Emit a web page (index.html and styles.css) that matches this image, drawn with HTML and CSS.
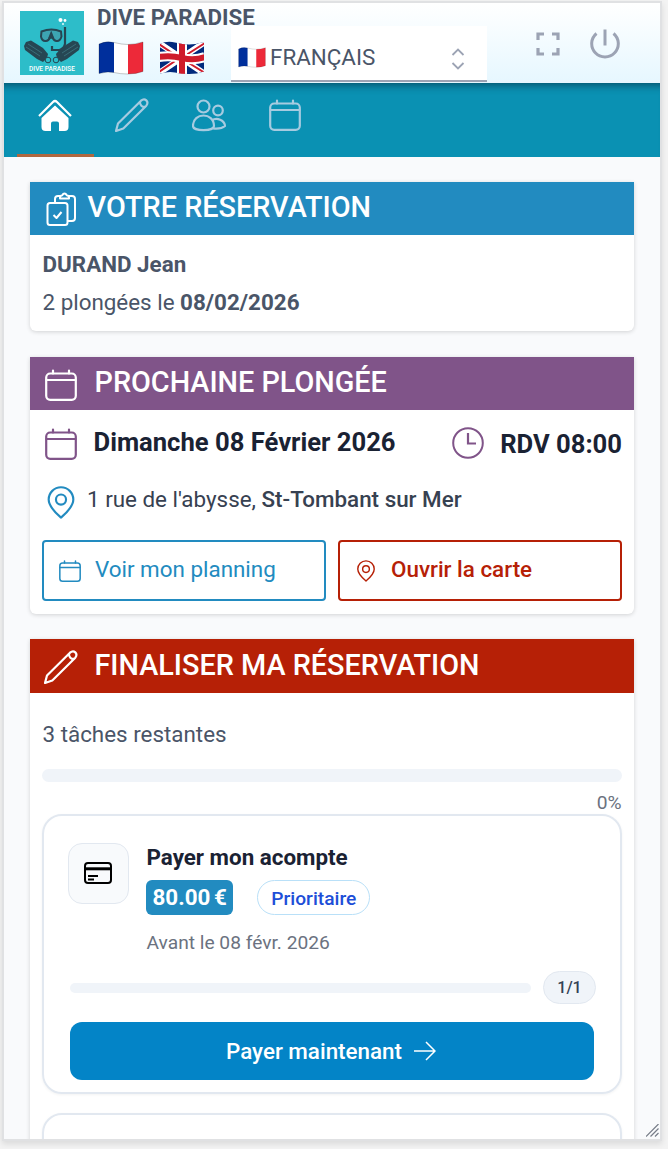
FILE: index.html
```html
<!DOCTYPE html>
<html lang="fr">
<head>
    <meta charset="UTF-8">
    <meta name="viewport" content="width=device-width, initial-scale=1.0">
    <title>Dive Paradise</title>
    <link rel="stylesheet" href="styles.css">
</head>
<body>
    <!-- Shared icons -->
    <svg class="sprite" aria-hidden="true">
        <symbol id="calendar" viewBox="0 0 32 32">
            <g fill="none" stroke="currentColor" stroke-width="2.200" stroke-linecap="round">
                <rect x="1.200" y="4.500" width="29.600" height="26.300" rx="4"/>
                <path d="M1.500 11h29M8 1.500v3M24 1.500v3"/>
            </g>
        </symbol>
        <symbol id="pencil" viewBox="0 0 34 34">
            <g fill="none" stroke="currentColor" stroke-width="2.200" stroke-linejoin="round">
                <path d="M1 33l2-7.500L26 2.700c4-3.500 8.300 1 5.300 5L8.300 30.500z"/>
                <path d="M25 3.700c-.3 3.500 2 5.500 5.300 5.200"/>
            </g>
        </symbol>
        <symbol id="pin" viewBox="0 0 28 34">
            <g fill="none" stroke="currentColor" stroke-width="2.200">
                <path d="M14 32.500C10 29 1.300 22 1.300 14a12.700 12.700 0 0 1 25.400 0c0 8-8.700 15-12.700 18.500z"/>
                <circle cx="14" cy="14" r="5.200"/>
            </g>
        </symbol>
        <symbol id="flag-fr" viewBox="0 0 46 34">
            <path d="M1 3Q8-.5 16 1.500V31.500Q8 30 1 32.500z" fill="#002f9c"/>
            <path d="M16 1.500Q23 3.500 30 3.500V33Q23 33 16 31.500z" fill="#fff"/>
            <path d="M30 3.500Q38 3.500 45 1V30.500Q38 33 30 33z" fill="#ed2939"/>
            <path d="M1 3Q8-.5 16 1.500T30 3.500T45 1V30.500Q38 33 30 33T16 31.500T1 32.500z" fill="none" stroke="#000" stroke-opacity=".22"/>
        </symbol>
        <symbol id="flag-gb" viewBox="0 0 46 34">
            <clipPath id="wave"><path d="M1 3Q8-.5 16 1.500T30 3.500T45 1V30.500Q38 33 30 33T16 31.500T1 32.500z"/></clipPath>
            <g clip-path="url(#wave)" fill="none">
                <path d="M0 0h46v34H0z" fill="#012a7d"/>
                <path d="M0 2l46 31M0 32L46 1" stroke="#fff" stroke-width="6"/>
                <path d="M0 3l22 15M24 16L46 2M0 31l22-15M25 19l21 13" stroke="#cf1b2b" stroke-width="2"/>
                <path d="M23 0v34M0 16q11-2 23 1t23-1" stroke="#fff" stroke-width="10"/>
                <path d="M23 0v34M0 16q11-2 23 1t23-1" stroke="#cf1b2b" stroke-width="6"/>
            </g>
        </symbol>
    </svg>

    <div class="app">
        <header class="header">
            <svg class="logo" viewBox="0 0 64 64">
                <rect width="64" height="64" fill="#2dbdc9"/>
                <!-- fins -->
                <path d="M4 35l2-4 5-1.500L23 37l5 6-1 4-4 4-6-3L5 39z" fill="#264653"/>
                <path d="M60 35l-2-4-5-1.500L41 37l-5 6 1 4 4 4 6-3 12-9z" fill="#264653"/>
                <path d="M6 36l14 9M8 33l14 9M58 36l-14 9M56 33l-14 9" stroke="#3d7682" stroke-width=".8"/>
                <g fill="#2dbdc9" stroke="#264653" stroke-width="1"><circle cx="28" cy="49" r="2.800"/><circle cx="36" cy="49" r="2.800"/></g>
                <!-- mask and snorkel -->
                <path d="M21.500 20.500q10-4 19.500 0l.5 5q-1.500 5-5 4.500-2.500 0-4-3.500h-2.500q-1.500 3.500-4 3.500-4 .5-5-4.500z" fill="#3da5b2" stroke="#264653" stroke-width="2"/>
                <path d="M28 27.500l3.200-8 3.200 8z" fill="#264653"/>
                <path d="M45 16v17q-1.500 5.500-6 6h-7v-4" fill="none" stroke="#264653" stroke-width="2.200"/>
                <g fill="#fff"><circle cx="40.500" cy="9" r="2"/><circle cx="45" cy="9.500" r="1.400"/><circle cx="43" cy="13" r=".9"/></g>
                <text x="9" y="60" textLength="46" lengthAdjust="spacingAndGlyphs" class="logo-text">DIVE PARADISE</text>
            </svg>
            <div class="brand">
                <div class="brand-name">DIVE PARADISE</div>
                <div class="languages">
                    <svg class="flag"><use href="#flag-fr"/></svg>
                    <svg class="flag"><use href="#flag-gb"/></svg>
                    <div class="language-select">
                        <svg class="flag-small"><use href="#flag-fr"/></svg>
                        <span>FRANÇAIS</span>
                        <svg class="chevrons" viewBox="0 0 14 22"><path d="M1.500 7L7 1.500 12.500 7M1.500 15L7 20.500 12.500 15" fill="none" stroke="currentColor" stroke-width="1.800"/></svg>
                    </div>
                </div>
            </div>
            <svg class="fullscreen" viewBox="0 0 24 24"><path d="M2 8V2H8M16 2h6V8M22 16v6H16M8 22H2V16" fill="none" stroke="currentColor" stroke-width="3.200"/></svg>
            <svg class="power" viewBox="0 0 30 30"><path d="M6.500 4.500a13.300 13.300 0 1 0 17 0M15 .500v16" fill="none" stroke="currentColor" stroke-width="3"/></svg>
        </header>

        <nav class="nav">
            <a class="nav-item active">
                <svg viewBox="0 0 34 34">
                    <path d="M1 18L15 4q2-2 4 0l14 14" fill="none" stroke="currentColor" stroke-width="2.200"/>
                    <path d="M17 7.500L30.500 20v9q0 4-4 4H21v-7.500q0-2-2-2h-4q-2 0-2 2V33H7.500q-4 0-4-4v-9z" fill="currentColor"/>
                </svg>
            </a>
            <a class="nav-item"><svg><use href="#pencil"/></svg></a>
            <a class="nav-item">
                <svg viewBox="0 0 34 34">
                    <g fill="none" stroke="currentColor" stroke-width="2.200">
                        <circle cx="11.500" cy="8.500" r="6"/>
                        <circle cx="26" cy="12.500" r="4.800"/>
                        <path d="M1 28C1 14 22 14 22 28C22 33.500 1 33.500 1 28zM19.500 22.500C25 19 32.500 22 33 28Q29 31.500 21 30.500"/>
                    </g>
                </svg>
            </a>
            <a class="nav-item"><svg class="nav-calendar"><use href="#calendar"/></svg></a>
        </nav>

        <main class="content">
            <section class="card">
                <h2 class="card-title blue">
                    <svg class="clipboard" viewBox="0 0 30 34">
                        <g fill="none" stroke="currentColor" stroke-width="2" stroke-linejoin="round">
                            <rect x="1.500" y="11" width="20" height="22" rx="2.500"/>
                            <path d="M9 11V7q0-3 3-3h3M22 4h4q3 0 3 3v19q0 3-3 3h-4M14 5.500q0-2 2-2 2.500-4 5 0 2 0 2 2v1h-9z"/>
                            <path d="M7.500 23l3 3 5-6"/>
                        </g>
                    </svg>
                    VOTRE RÉSERVATION
                </h2>
                <div class="booking">
                    <div><strong>DURAND Jean</strong></div>
                    <div>2 plongées le <strong>08/02/2026</strong></div>
                </div>
            </section>

            <section class="card">
                <h2 class="card-title purple"><svg class="icon"><use href="#calendar"/></svg>PROCHAINE PLONGÉE</h2>
                <div class="dive">
                    <div class="dive-date">
                        <svg class="icon"><use href="#calendar"/></svg>
                        <span>Dimanche 08 Février 2026</span>
                        <svg class="icon clock" viewBox="0 0 32 32"><path d="M16 6v10.500h8" fill="none" stroke="currentColor" stroke-width="2.200"/><circle cx="16" cy="16" r="14.800" fill="none" stroke="currentColor" stroke-width="2"/></svg>
                        <span class="dive-time">RDV 08:00</span>
                    </div>
                    <div class="dive-place">
                        <svg class="pin"><use href="#pin"/></svg>
                        <span>1 rue de l'abysse, <b>St-Tombant sur Mer</b></span>
                    </div>
                    <div class="actions">
                        <a class="btn btn-blue"><svg><use href="#calendar"/></svg>Voir mon planning</a>
                        <a class="btn btn-red"><svg><use href="#pin"/></svg>Ouvrir la carte</a>
                    </div>
                </div>
            </section>

            <section class="card">
                <h2 class="card-title red"><svg class="icon pencil"><use href="#pencil"/></svg>FINALISER MA RÉSERVATION</h2>
                <div class="tasks">
                    <div class="remaining">3 tâches restantes</div>
                    <div class="progress"></div>
                    <div class="percent">0%</div>
                    <article class="task">
                        <div class="task-head">
                            <div class="task-icon">
                                <svg viewBox="0 0 28 22"><rect x="1" y="1" width="26" height="20" rx="3" fill="none" stroke="#000" stroke-width="2"/><path d="M1 6.800h26" stroke="#000" stroke-width="3"/><path d="M4 14h10M4 17.500h6" stroke="#000" stroke-width="1.800"/></svg>
                            </div>
                            <div>
                                <h3>Payer mon acompte</h3>
                                <div class="tags"><span class="price">80.00 €</span><span class="priority">Prioritaire</span></div>
                                <div class="deadline">Avant le 08 févr. 2026</div>
                            </div>
                        </div>
                        <div class="task-progress"><div class="bar"></div><span class="count">1/1</span></div>
                        <button class="pay">Payer maintenant
                            <svg viewBox="0 0 22 20"><path d="M0 10h20.500M12 1l9 9-9 9" fill="none" stroke="currentColor" stroke-width="1.500"/></svg>
                        </button>
                    </article>
                    <article class="task"></article>
                </div>
            </section>
        </main>
        <svg class="resize" viewBox="0 0 13 13"><path d="M0 12.500L12.500 0M4.500 12.500l8-8M9 12.500L12.500 9" stroke="#777c88" stroke-width="1.200"/></svg>
    </div>
</body>
</html>
```

FILE: styles.css
```css
:root {
    --blue: #228bc0;
    --purple: #805489;
    --red: #b62006;
    --line: #e2e8f0;
    --dark: #1a2233;
}

* {
    box-sizing: border-box;
}

body {
    margin: 0;
    padding: 1px 6px 0 2px;
    height: 1149px;
    overflow: hidden;
    background: #f3f3f3;
    font-family: Roboto, "Liberation Sans", sans-serif;
    font-size: 22.4px;
    color: #4a5568;
}

h2, h3 {
    margin: 0;
}

svg {
    display: block;
    flex-shrink: 0;
}

.sprite {
    position: absolute;
    width: 0;
    height: 0;
}

.app {
    position: relative;
    height: 1140px;
    overflow: hidden;
    border: 2px solid #e0e1e3;
    background: #f9fafc;
    box-shadow: 0 3px 6px rgba(0, 0, 0, 0.1);
}

.header {
    display: flex;
    height: 80px;
    padding-left: 16px;
    background: linear-gradient(#fff, #e6f7ff);
    color: #9ca3b4;
}

.logo {
    width: 64px;
    height: 64px;
    margin-top: 8px;
}

.logo-text {
    font-size: 7px;
    font-weight: 500;
    fill: #fff;
}

.brand {
    padding: 5px 0 0 13px;
}

.brand-name {
    line-height: 18px;
    font-size: 22.3px;
    font-weight: bold;
    color: #4a5568;
}

.languages {
    display: flex;
}

.flag {
    width: 46px;
    height: 34px;
    margin: 15px 15px 0 1px;
}

.flag + .flag {
    margin-right: 26px;
    margin-left: 0;
}

.language-select {
    display: flex;
    align-items: center;
    width: 256px;
    height: 56px;
    padding: 8px 22px 0 7px;
    background: #fff;
    border-bottom: 2px solid #9ca3b4;
    color: #4a5568;
}

.flag-small {
    width: 28px;
    height: 21px;
    margin-right: 4px;
}

.chevrons {
    width: 14px;
    height: 22px;
    margin: 4px 0 0 auto;
    color: #9ca3b4;
}

.fullscreen {
    width: 24px;
    height: 24px;
    margin: 29px 0 0 49px;
}

.power {
    width: 30px;
    height: 30px;
    margin: 26px 0 0 30px;
}

.nav {
    display: flex;
    height: 74px;
    padding-left: 13px;
    background: #0a91b3;
    box-shadow: inset 0 10px 9px -8px rgba(0, 40, 60, 0.65);
}

.nav-item {
    width: 77px;
    padding: 15px 0 0 21px;
    border-bottom: 3px solid transparent;
    color: #a6cbe0;
}

.nav-item svg {
    width: 34px;
    height: 34px;
}

.nav-item .nav-calendar {
    width: 32px;
    height: 32px;
    margin-top: 1px;
}

.nav-item.active {
    border-color: #b0673f;
    color: #fff;
}

.content {
    display: flex;
    flex-direction: column;
    gap: 26px;
    padding: 25px 26px 0;
}

.card {
    background: #fff;
    border-radius: 0 0 6px 6px;
    box-shadow: 0 1px 4px rgba(0, 0, 0, 0.16);
}

.card-title {
    display: flex;
    height: 53px;
    padding-left: 15px;
    line-height: 50px;
    font-size: 28.8px;
    font-weight: 500;
    color: #fff;
}

.blue { background: var(--blue); }
.purple { background: var(--purple); }
.red { background: var(--red); }

.icon {
    width: 32px;
    height: 32px;
}

.card-title .icon {
    margin: 12px 17.5px 0 0;
}

.card-title .pencil {
    width: 34px;
    height: 34px;
    margin: 11px 16.5px 0 -1px;
}

.clipboard {
    width: 30px;
    height: 34px;
    margin: 10px 11.5px 0 1px;
}

.booking {
    padding: 10px 12.5px;
    line-height: 38px;
}

.dive {
    padding: 18px 12px 13px;
}

.dive-date {
    display: flex;
    height: 32px;
    padding-left: 3px;
    line-height: 29px;
    font-size: 25.6px;
    font-weight: bold;
    color: var(--dark);
}

.dive-date .icon {
    color: var(--purple);
    margin-right: 16.5px;
}

.dive-date .clock {
    margin: -1px 16px 0 auto;
}

.dive-time {
    line-height: 33px;
}

.dive-place {
    display: flex;
    margin: 26px 0 21px;
    padding-left: 5px;
    line-height: 27px;
    color: #374151;
}

.dive-place .pin {
    width: 28px;
    height: 33px;
    margin-right: 12px;
    color: var(--blue);
}

.dive-place b {
    font-weight: 500;
}

.actions {
    display: flex;
    gap: 12px;
}

.btn {
    display: flex;
    flex: 1;
    align-items: center;
    height: 61px;
    padding: 0 15px 3px;
    border: 2px solid;
    border-radius: 4px;
}

.btn svg {
    width: 22px;
    height: 22px;
    margin: 4px 14px 0 0;
}

.btn-blue {
    color: var(--blue);
}

.btn-red {
    color: var(--red);
    font-weight: 500;
}

.card:last-child {
    margin-top: -1px;
}

.card:last-child .card-title {
    height: 54px;
    line-height: 52px;
}

.tasks {
    padding: 28px 12px 0;
}

.remaining {
    padding-left: 0.5px;
    line-height: 26px;
}

.progress {
    height: 13px;
    margin-top: 22px;
    border-radius: 7px;
    background: #f0f4f9;
}

.percent {
    padding: 10px 0.5px 0 0;
    line-height: 22px;
    font-size: 19.2px;
    text-align: right;
    color: #6b7280;
}

.task {
    height: 280px;
    margin-bottom: 19px;
    padding: 27px 26px 0 24px;
    border: 2px solid var(--line);
    border-radius: 20px;
    box-shadow: 0 1px 3px rgba(0, 0, 0, 0.05);
}

.task-head {
    display: flex;
    gap: 17px;
}

.task-icon {
    display: flex;
    align-items: center;
    justify-content: center;
    width: 61px;
    height: 61px;
    padding: 0 2px 2px 0;
    border: 1px solid var(--line);
    border-radius: 14px;
    background: #f8fafc;
}

.task-icon svg {
    width: 28px;
    height: 22px;
}

.task h3 {
    padding-left: 0.5px;
    line-height: 28px;
    font-size: 22.4px;
    font-weight: bold;
    color: var(--dark);
}

.tags {
    display: flex;
    gap: 24px;
    margin-top: 9px;
}

.price,
.priority {
    height: 35px;
    line-height: 35px;
}

.price {
    padding: 0 6.5px;
    border-radius: 6px;
    background: var(--blue);
    font-weight: bold;
    word-spacing: -2px;
    color: #fff;
}

.priority {
    padding: 0 13px;
    border: 1px solid #b9e0f8;
    border-radius: 18px;
    font-size: 19.2px;
    font-weight: 500;
    color: #1d4ed8;
}

.deadline {
    margin-top: 15px;
    padding-left: 0.5px;
    line-height: 26px;
    font-size: 19.2px;
    color: #6b7280;
}

.task-progress {
    display: flex;
    align-items: center;
    gap: 12px;
    margin: 15px -2px 18px 2px;
}

.bar {
    flex: 1;
    height: 10px;
    border-radius: 5px;
    background: #f0f4f9;
}

.count {
    width: 53px;
    height: 33px;
    border: 1px solid var(--line);
    border-radius: 17px;
    background: #f0f4f9;
    line-height: 31px;
    font-size: 16px;
    font-weight: 500;
    text-align: center;
    color: #334155;
}

.pay {
    display: flex;
    align-items: center;
    justify-content: center;
    gap: 12px;
    width: 524px;
    height: 58px;
    margin-left: 2px;
    padding: 0 8px 0 6px;
    border: 0;
    border-radius: 12px;
    background: #0384c7;
    font: 500 22.4px Roboto, "Liberation Sans", sans-serif;
    color: #fff;
}

.pay svg {
    width: 22px;
    height: 20px;
}

.resize {
    position: absolute;
    right: 1px;
    bottom: 2px;
    width: 13px;
    height: 13px;
}
```
